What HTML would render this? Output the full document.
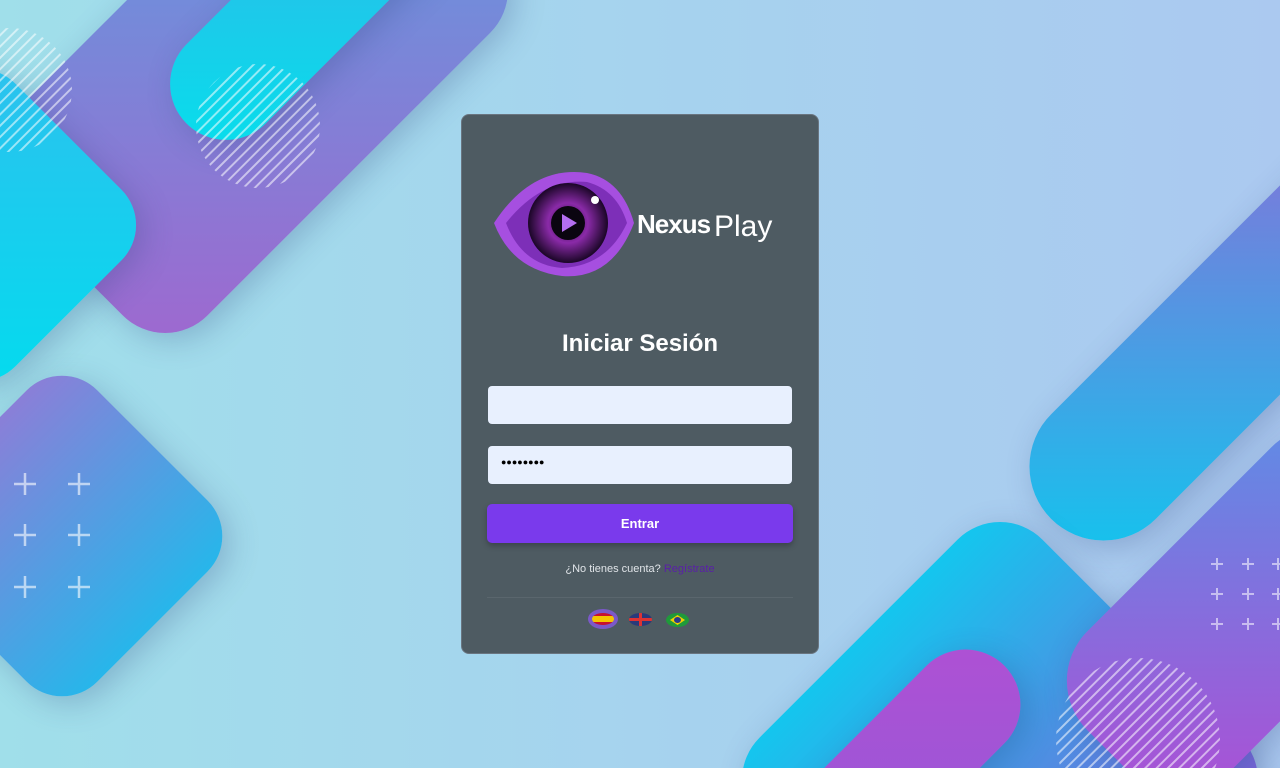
<!DOCTYPE html>
<html><head><meta charset="utf-8"><style>
*{margin:0;padding:0;box-sizing:border-box}
html,body{width:1280px;height:768px;overflow:hidden}
body{font-family:"Liberation Sans",sans-serif}
.wrap{position:relative;width:1280px;height:768px;overflow:hidden;background:linear-gradient(90deg,#a0dfea 0%,#a6d3ee 50%,#abc9f0 100%)}
.s{position:absolute;transform:translate(-50%,-50%) rotate(-45deg);box-shadow:0 10px 30px rgba(40,60,120,.25)}
.card{position:absolute;left:461px;top:114px;width:358px;height:540px;background:#4e5b62;border-radius:8px;border:1px solid #6a7580}
.in{position:absolute;left:26px;width:304px;height:38px;background:#e8f0fe;border-radius:4px}
</style></head><body><div class="wrap">
<div class="s" style="left:250px;top:75px;width:520px;height:280px;border-radius:60px;background:linear-gradient(45deg,#a067cf,#5aa0e0)"></div>
<div class="s" style="left:335px;top:-25px;width:420px;height:112px;border-radius:56px;background:linear-gradient(45deg,#05e0ec,#40a8e6)"></div>
<div class="s" style="left:-20px;top:225px;width:250px;height:250px;border-radius:50px;background:linear-gradient(45deg,#02dcee,#2ec0ee)"></div>
<div class="s" style="left:62px;top:536px;width:256px;height:256px;border-radius:50px;background:linear-gradient(0deg,#27b6ea,#8a7fd8)"></div>
<div class="s" style="left:1235px;top:335px;width:520px;height:148px;border-radius:74px;background:linear-gradient(45deg,#10c6ee,#8a6fd8)"></div>
<div class="s" style="left:1000px;top:780px;width:400px;height:400px;border-radius:60px;background:linear-gradient(0deg,#8060d8,#14c6ee)"></div>
<div class="s" style="left:870px;top:800px;width:380px;height:110px;border-radius:55px;background:linear-gradient(45deg,#8a5cd8,#b050d4)"></div>
<div class="s" style="left:1250px;top:610px;width:400px;height:200px;border-radius:70px;background:linear-gradient(45deg,#b04cd4,#5a90e6)"></div>
<svg style="position:absolute;left:0;top:0" width="1280" height="768">
<defs><pattern id="h" width="8" height="8" patternUnits="userSpaceOnUse" patternTransform="rotate(-45)"><rect width="8" height="2" fill="rgba(255,255,255,.55)"/></pattern></defs>
<circle cx="258" cy="126" r="62" fill="url(#h)"/><circle cx="10" cy="90" r="62" fill="url(#h)"/><circle cx="1138" cy="740" r="82" fill="url(#h)"/>
<g stroke="rgba(255,255,255,.6)" stroke-width="2.5"><path d="M14 484h22M25 473v22M68 484h22M79 473v22M14 535h22M25 524v22M68 535h22M79 524v22M14 587h22M25 576v22M68 587h22M79 576v22"/></g>
<g stroke="rgba(255,255,255,.55)" stroke-width="2"><path d="M1211 564h12M1217 558v12M1242 564h12M1248 558v12M1272 564h12M1278 558v12M1211 594h12M1217 588v12M1242 594h12M1248 588v12M1272 594h12M1278 588v12M1211 624h12M1217 618v12M1242 624h12M1248 618v12M1272 624h12M1278 618v12"/></g>
</svg>
<div class="card">
<svg style="position:absolute;left:30px;top:55px" width="300" height="112">
<defs><radialGradient id="ir"><stop offset="0" stop-color="#2a0a3a"/><stop offset=".5" stop-color="#8a2aa8"/><stop offset="1" stop-color="#1a0626"/></radialGradient></defs>
<path d="M2 53 Q40 -5 95 3 Q130 10 142 53 Q120 110 70 106 Q20 100 2 53Z" fill="#a64fe0"/>
<path d="M14 53 Q50 8 95 12 Q125 20 135 53 Q115 96 70 98 Q30 95 14 53Z" fill="#7d2fb8"/>
<circle cx="76" cy="53" r="40" fill="url(#ir)"/>
<circle cx="76" cy="53" r="17" fill="#0a0510"/>
<path d="M70 44 L85 53 L70 62Z" fill="#b46ef0"/>
<circle cx="103" cy="30" r="4" fill="#fff"/>
<text x="145" y="63" fill="#fff" font-size="26" font-weight="bold" font-family="Liberation Sans" letter-spacing="-1">Nexus</text>
<text x="222" y="66" fill="#fff" font-size="30" font-family="Liberation Sans">Play</text>
</svg>
<div style="position:absolute;top:215px;width:100%;text-align:center;color:#fff;font-size:24px;font-weight:bold">Iniciar Sesión</div>
<div class="in" style="top:271px"></div>
<div class="in" style="top:331px;padding:11px 13px;font-size:9px">●●●●●●●●</div>
<div style="position:absolute;left:25px;top:389px;width:306px;height:39px;background:#7a3aec;border-radius:5px;color:#fff;font-size:13px;font-weight:bold;text-align:center;line-height:39px;box-shadow:0 3px 6px rgba(0,0,0,.25)">Entrar</div>
<div style="position:absolute;top:448px;width:100%;text-align:center;color:#e0e4e8;font-size:11px">¿No tienes cuenta? <span style="color:#5a1fa8">Regístrate</span></div>
<div style="position:absolute;left:25px;top:482px;width:306px;height:1px;background:#5a666d"></div>
<div style="position:absolute;left:126px;top:494px;width:30px;height:20px;border-radius:50%;background:#7b59c8"></div>
<div style="position:absolute;left:130px;top:498px;width:22px;height:12px;border-radius:50%;background:linear-gradient(#c8102e 25%,#f5c400 25%,#f5c400 75%,#c8102e 75%)"></div>
<div style="position:absolute;left:167px;top:498px;width:23px;height:13px;border-radius:50%;background:#2a3a7a;overflow:hidden"><div style="position:absolute;left:0;top:5px;width:23px;height:3px;background:#d33"></div><div style="position:absolute;left:10px;top:0;width:3px;height:13px;background:#d33"></div></div>
<div style="position:absolute;left:204px;top:498px;width:23px;height:14px;border-radius:50%;background:#1f9a3a"><div style="position:absolute;left:4px;top:2px;width:15px;height:10px;background:#f2d000;clip-path:polygon(50% 0,100% 50%,50% 100%,0 50%)"></div><div style="position:absolute;left:8px;top:4px;width:7px;height:6px;border-radius:50%;background:#2a3a8a"></div></div>
</div>
</div></body></html>
